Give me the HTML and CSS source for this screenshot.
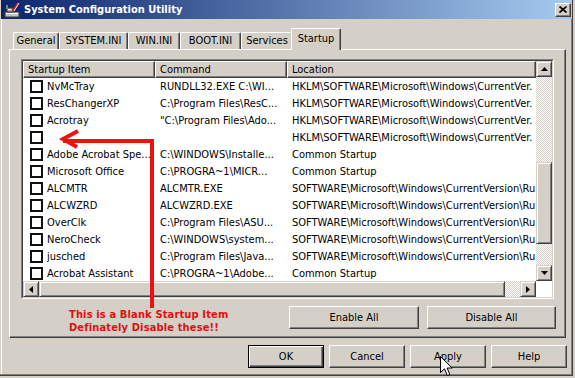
FILE: index.html
```html
<!DOCTYPE html>
<html>
<head>
<meta charset="utf-8">
<title>System Configuration Utility</title>
<link rel="stylesheet" href="styles.css">
</head>
<body>
<div class="window">
  <div class="titlebar">
    <svg class="app-icon" width="16" height="16" viewBox="0 0 16 16">
      <rect x="1" y="10" width="14" height="5" fill="#c0c0c0" stroke="#404040" stroke-width="1"/>
      <rect x="2" y="11" width="12" height="1" fill="#fff"/>
      <rect x="3" y="6" width="6" height="4" fill="#a0a0a0" stroke="#404040" stroke-width="1"/>
      <rect x="4" y="7" width="3" height="1" fill="#fff"/>
      <rect x="2" y="3" width="2" height="4" fill="#808080"/>
      <line x1="14" y1="1" x2="9" y2="9" stroke="#e01010" stroke-width="2"/>
      <line x1="15" y1="1" x2="10" y2="9" stroke="#fff" stroke-width="1"/>
    </svg>
    <span class="title">System Configuration Utility</span>
    <div class="close-btn">
      <svg width="8" height="7" viewBox="0 0 8 7">
        <path d="M0.5 0.5 L7.5 6.5 M7.5 0.5 L0.5 6.5" stroke="#000" stroke-width="1.7"/>
      </svg>
    </div>
  </div>

  <div class="tabs">
    <div class="tab w-general">General</div>
    <div class="tab w-system">SYSTEM.INI</div>
    <div class="tab w-win">WIN.INI</div>
    <div class="tab w-boot">BOOT.INI</div>
    <div class="tab w-services">Services</div>
    <div class="tab tab-active">Startup</div>
  </div>

  <div class="panel">
    <div class="listview">
      <div class="lv-inner">
        <div class="lv-list">
          <div class="lv-header cols">
            <div class="hcell">Startup Item</div>
            <div class="hcell">Command</div>
            <div class="hcell">Location</div>
          </div>
          <div class="row cols"><div class="cell c1"><span class="chk"></span>NvMcTray</div><div class="cell">RUNDLL32.EXE C:\WI...</div><div class="cell">HKLM\SOFTWARE\Microsoft\Windows\CurrentVer.</div></div>
          <div class="row cols"><div class="cell c1"><span class="chk"></span>ResChangerXP</div><div class="cell">C:\Program Files\ResC...</div><div class="cell">HKLM\SOFTWARE\Microsoft\Windows\CurrentVer.</div></div>
          <div class="row cols"><div class="cell c1"><span class="chk"></span>Acrotray</div><div class="cell">"C:\Program Files\Ado...</div><div class="cell">HKLM\SOFTWARE\Microsoft\Windows\CurrentVer.</div></div>
          <div class="row cols"><div class="cell c1"><span class="chk"></span></div><div class="cell"></div><div class="cell">HKLM\SOFTWARE\Microsoft\Windows\CurrentVer.</div></div>
          <div class="row cols"><div class="cell c1"><span class="chk"></span>Adobe Acrobat Spe...</div><div class="cell">C:\WINDOWS\Installe...</div><div class="cell">Common Startup</div></div>
          <div class="row cols"><div class="cell c1"><span class="chk"></span>Microsoft Office</div><div class="cell">C:\PROGRA~1\MICR...</div><div class="cell">Common Startup</div></div>
          <div class="row cols"><div class="cell c1"><span class="chk"></span>ALCMTR</div><div class="cell">ALCMTR.EXE</div><div class="cell">SOFTWARE\Microsoft\Windows\CurrentVersion\Ru</div></div>
          <div class="row cols"><div class="cell c1"><span class="chk"></span>ALCWZRD</div><div class="cell">ALCWZRD.EXE</div><div class="cell">SOFTWARE\Microsoft\Windows\CurrentVersion\Ru</div></div>
          <div class="row cols"><div class="cell c1"><span class="chk"></span>OverClk</div><div class="cell">C:\Program Files\ASU...</div><div class="cell">SOFTWARE\Microsoft\Windows\CurrentVersion\Ru</div></div>
          <div class="row cols"><div class="cell c1"><span class="chk"></span>NeroCheck</div><div class="cell">C:\WINDOWS\system...</div><div class="cell">SOFTWARE\Microsoft\Windows\CurrentVersion\Ru</div></div>
          <div class="row cols"><div class="cell c1"><span class="chk"></span>jusched</div><div class="cell">C:\Program Files\Java...</div><div class="cell">SOFTWARE\Microsoft\Windows\CurrentVersion\Ru</div></div>
          <div class="row cols"><div class="cell c1"><span class="chk"></span>Acrobat Assistant</div><div class="cell">C:\PROGRA~1\Adobe...</div><div class="cell">Common Startup</div></div>
        </div>
        <div class="vscroll">
          <div class="sbtn"><svg width="7" height="4" viewBox="0 0 7 4"><path d="M3.5 0 L7 4 L0 4 Z" fill="#000"/></svg></div>
          <div class="track vtrack"><div class="thumb vthumb"></div></div>
          <div class="sbtn"><svg width="7" height="4" viewBox="0 0 7 4"><path d="M0 0 L7 0 L3.5 4 Z" fill="#000"/></svg></div>
        </div>
        <div class="hscroll">
          <div class="sbtn"><svg width="4" height="7" viewBox="0 0 4 7"><path d="M4 0 L4 7 L0 3.5 Z" fill="#000"/></svg></div>
          <div class="track htrack"><div class="thumb hthumb"></div></div>
          <div class="sbtn"><svg width="4" height="7" viewBox="0 0 4 7"><path d="M0 0 L4 3.5 L0 7 Z" fill="#000"/></svg></div>
        </div>
        <div class="corner"></div>
      </div>
    </div>

    <div class="panel-actions">
      <div class="annot">This is a Blank Startup Item<br>Definately Disable these!!</div>
      <div class="btn-group">
        <div class="btn w-enable">Enable All</div>
        <div class="btn w-disable">Disable All</div>
      </div>
    </div>
  </div>

  <div class="dialog-buttons">
    <div class="btn dbtn btn-default">OK</div>
    <div class="btn dbtn">Cancel</div>
    <div class="btn dbtn">Apply</div>
    <div class="btn dbtn">Help</div>
  </div>

  <svg class="annot-arrow" width="575" height="378" viewBox="0 0 575 378">
    <path d="M78 131 L63 139 L77 147" fill="none" stroke="#ee1111" stroke-width="4" stroke-linejoin="miter"/>
    <path d="M63 141 L152 141 L152 308" fill="none" stroke="#ee1111" stroke-width="4" stroke-linejoin="miter"/>
  </svg>

  <svg class="cursor" width="14" height="22" viewBox="0 0 14 22">
    <path d="M0.5 0.5 L0.5 16.5 L4.5 12.8 L7.3 19.5 L9.8 18.4 L7.1 12 L12.2 12 Z" fill="#fff" stroke="#000" stroke-width="1"/>
  </svg>
</div>
</body>
</html>
```
FILE: styles.css
```css
* { box-sizing: border-box; }

body {
  margin: 0;
  background: #d4d0c8;
  font-family: "DejaVu Sans Condensed", "DejaVu Sans", sans-serif;
  font-stretch: condensed;
  font-size: 11px;
  color: #000;
}

.window {
  position: relative;
  width: 575px;
  height: 378px;
  overflow: hidden;
  background: #d4d0c8;
  display: flex;
  flex-direction: column;
  box-shadow:
    inset -2px -2px 0 #d4d0c8,
    inset -3px -3px 0 #404040,
    inset -4px -4px 0 #808080,
    inset 1px 0 0 #d4d0c8,
    inset 2px 0 0 #ffffff;
}

/* Title bar */
.titlebar {
  height: 19px;
  margin: 0 3px 0 1px;
  background: linear-gradient(to right, #0a246a, #a6caf0);
  display: flex;
  align-items: center;
  padding-left: 3px;
}
.app-icon { flex: none; }
.title {
  margin-left: 4px;
  color: #fff;
  font-weight: bold;
  font-size: 11px;
}
.close-btn {
  margin-left: auto;
  margin-right: 1px;
  width: 16px;
  height: 14px;
  background: #d4d0c8;
  border: 1px solid;
  border-color: #fff #404040 #404040 #fff;
  box-shadow: inset -1px -1px 0 #808080;
  display: flex;
  align-items: center;
  justify-content: center;
}

/* Tabs */
.tabs {
  margin-top: 9px;
  height: 21px;
  padding-left: 13px;
  display: flex;
  align-items: flex-end;
  position: relative;
  z-index: 2;
}
.tab {
  height: 17px;
  line-height: 15px;
  text-align: center;
  background: #d4d0c8;
  border-top: 1px solid #fff;
  border-left: 1px solid #fff;
  border-right: 1px solid #404040;
  box-shadow: inset -1px 0 0 #808080;
  border-radius: 2px 2px 0 0;
  white-space: nowrap;
}
.w-general { width: 46px; }
.w-system { width: 69px; }
.w-win { width: 52px; }
.w-boot { width: 61px; }
.w-services { width: 52px; }
.tab-active {
  width: 50px;
  height: 22px;
  margin-left: -2px;
  margin-bottom: -1px;
  line-height: 19px;
  position: relative;
  z-index: 3;
}

/* Panel */
.panel {
  margin-left: 9px;
  width: 557px;
  height: 289px;
  border: 1px solid;
  border-color: #fff #404040 #404040 #fff;
  box-shadow: inset -1px -1px 0 #808080;
  padding: 9px 0 0 11px;
  display: flex;
  flex-direction: column;
}

.listview {
  width: 533px;
  height: 240px;
  border: 1px solid;
  border-color: #808080 #fff #fff #808080;
}
.lv-inner {
  height: 100%;
  border: 1px solid;
  border-color: #404040 #d4d0c8 #d4d0c8 #404040;
  background: #fff;
  display: grid;
  grid-template-columns: 1fr 16px;
  grid-template-rows: 1fr 16px;
}
.lv-list {
  overflow: hidden;
  background: #fff;
}
.cols {
  display: grid;
  grid-template-columns: 132px 132px 1fr;
}
.lv-header { height: 17px; }
.hcell {
  background: #d4d0c8;
  border: 1px solid;
  border-color: #fff #404040 #404040 #fff;
  box-shadow: inset -1px -1px 0 #808080;
  padding-left: 4px;
  line-height: 15px;
  white-space: nowrap;
  overflow: hidden;
}
.row { height: 17px; }
.cell {
  padding-left: 5px;
  line-height: 17px;
  white-space: nowrap;
  overflow: hidden;
}
.c1 {
  padding-left: 7px;
  display: flex;
  align-items: center;
}
.chk {
  flex: none;
  width: 13px;
  height: 13px;
  border: 2px solid #111;
  background: #fff;
  margin-right: 4px;
}

/* Scrollbars */
.vscroll { display: flex; flex-direction: column; }
.hscroll { display: flex; }
.sbtn {
  flex: none;
  width: 16px;
  height: 16px;
  background: #d4d0c8;
  border: 1px solid;
  border-color: #d4d0c8 #404040 #404040 #d4d0c8;
  box-shadow: inset 1px 1px 0 #fff, inset -1px -1px 0 #808080;
  display: flex;
  align-items: center;
  justify-content: center;
}
.track {
  flex: 1;
  background: repeating-conic-gradient(#d4d0c8 0 25%, #fff 0 50%) 0 0 / 2px 2px;
  display: flex;
}
.vtrack { flex-direction: column; }
.thumb {
  background: #d4d0c8;
  border: 1px solid;
  border-color: #d4d0c8 #404040 #404040 #d4d0c8;
  box-shadow: inset 1px 1px 0 #fff, inset -1px -1px 0 #808080;
}
.vthumb { margin-top: 85px; height: 82px; width: 16px; }
.hthumb { width: 466px; height: 16px; }
.corner { background: #fff; }

/* Panel actions */
.panel-actions {
  margin-top: 7px;
  display: flex;
  align-items: flex-start;
}
.annot {
  margin-left: 48px;
  padding-top: 2px;
  color: #e01010;
  font-weight: bold;
  font-size: 11px;
  line-height: 13px;
  letter-spacing: 0.15px;
}
.btn-group {
  margin-left: auto;
  padding-right: 9px;
  display: flex;
  gap: 8px;
}
.btn {
  height: 23px;
  background: #d4d0c8;
  border: 1px solid;
  border-color: #fff #404040 #404040 #fff;
  box-shadow: inset -1px -1px 0 #808080;
  display: flex;
  align-items: center;
  justify-content: center;
  white-space: nowrap;
}
.w-enable { width: 130px; }
.w-disable { width: 129px; }

/* Dialog buttons */
.dialog-buttons {
  margin-top: 7px;
  padding-right: 8px;
  display: flex;
  justify-content: flex-end;
  gap: 5px;
}
.dbtn { width: 76px; }
.btn-default {
  border: 1px solid #000;
  box-shadow: inset 1px 1px 0 #fff, inset -1px -1px 0 #404040, inset -2px -2px 0 #808080;
}

/* Overlays */
.annot-arrow {
  position: absolute;
  left: 0;
  top: 0;
  pointer-events: none;
  z-index: 5;
}
.cursor {
  position: absolute;
  left: 440px;
  top: 356px;
  z-index: 6;
}
```
